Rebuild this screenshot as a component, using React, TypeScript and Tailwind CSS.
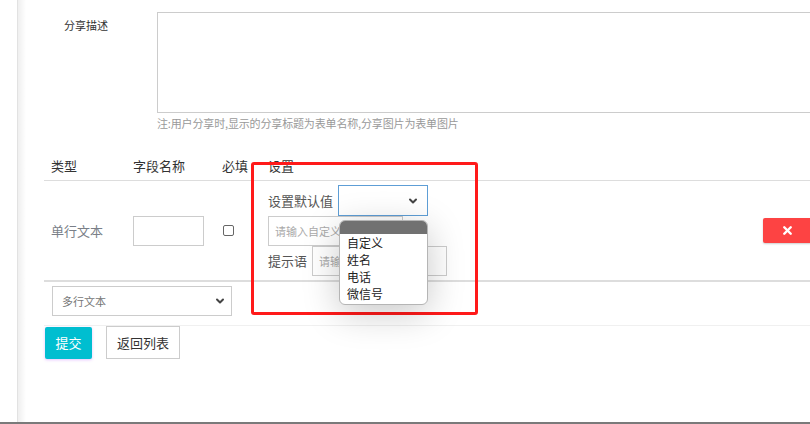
import { ChevronDown, X } from 'lucide-react';

const font = { fontFamily: '"Noto Sans CJK SC", "Noto Sans", sans-serif' };

const options = ['自定义', '姓名', '电话', '微信号'];

const App = () => {
	return (
		<div
			className="relative flex h-[424px] w-[810px] overflow-hidden border-b-2 border-[#7a7a7a] bg-white"
			style={font}
		>
			{/* left rail */}
			<div className="w-[17px] shrink-0 bg-white" />
			<div className="w-[9px] shrink-0 border-l border-[#e2e2e2] bg-gradient-to-r from-[#efefef] to-white" />

			<main className="flex min-w-0 flex-1 flex-col pl-[18px]">
				{/* share description */}
				<section className="mt-[12px] flex">
					<div className="w-[113px] shrink-0 pl-[20px] pt-[5px] text-[11px] leading-[16px] text-[#333]">
						分享描述
					</div>
					<div className="flex flex-col">
						<textarea
							readOnly
							className="h-[101px] w-[680px] shrink-0 resize-none border border-[#cccccc] outline-none"
						/>
						<p className="mt-[2px] text-[11px] leading-[16px] tracking-[-0.15px] text-[#999]">
							注:用户分享时,显示的分享标题为表单名称,分享图片为表单图片
						</p>
					</div>
				</section>

				{/* field table */}
				<section className="mt-[19px] w-[780px]">
					<div className="flex h-[31px] items-center border-b border-[#dddddd] pt-[2px] text-[13px] text-[#333]">
						<div className="w-[89px] pl-[7px]">类型</div>
						<div className="w-[89px]">字段名称</div>
						<div className="w-[46px]">必填</div>
						<div>设置</div>
					</div>

					<div className="flex h-[101px] items-start border-b-2 border-[#dddddd] text-[13px]">
						<div className="flex h-full w-[89px] items-center pl-[7px] text-[#7a7f88]">
							单行文本
						</div>
						<div className="flex h-full w-[89px] items-center">
							<input className="h-[30px] w-[71px] border border-[#cccccc] outline-none" />
						</div>
						<div className="flex h-full w-[46px] items-center pl-[1px]">
							<span className="h-[11px] w-[11px] rounded-[2px] border border-[#666]" />
						</div>
						<div className="flex w-[495px] flex-col pt-[4px] text-[#555]">
							<div className="flex h-[31px] items-center gap-[5px]">
								<span>设置默认值</span>
								<div className="relative">
									<div className="flex h-[31px] w-[90px] items-center justify-end border border-[#5e9ed6] pr-[8px]">
										<ChevronDown size={12} strokeWidth={4} className="text-[#444]" />
									</div>
									{/* open dropdown */}
									<ul className="absolute left-[1px] top-[35px] z-10 w-[89px] overflow-hidden rounded-[6px] border border-[#b5b5b5] bg-white pb-[2px] text-[12px] leading-[17px] text-[#222] shadow-[0_8px_36px_rgba(0,0,0,0.22)]">
										<li className="h-[13px] bg-[#717171]" />
										{options.map((o) => (
											<li key={o} className="pl-[7px]">
												{o}
											</li>
										))}
									</ul>
								</div>
							</div>
							<input
								placeholder="请输入自定义值"
								className="h-[30px] w-[135px] border border-[#cccccc] px-[6px] text-[11px] outline-none placeholder:text-[#aaa]"
							/>
							<div className="flex h-[30px] items-center gap-[5px]">
								<span>提示语</span>
								<input
									placeholder="请输入提示语"
									className="h-[30px] w-[135px] border border-[#cccccc] px-[6px] text-[11px] outline-none placeholder:text-[#aaa]"
								/>
							</div>
						</div>
						<div className="flex h-full items-center">
							<button className="flex h-[25px] w-[49px] items-center justify-center rounded-[2px] bg-[#fd4343] text-white shadow-[0_1px_2px_rgba(0,0,0,0.2)]">
								<X size={13} strokeWidth={4.5} />
							</button>
						</div>
					</div>

					<div className="border-b border-[#f0f0f0] pb-[9px] pl-[8px] pt-[4px]">
						<div className="flex h-[30px] w-[180px] items-center justify-between border border-[#cccccc] pl-[9px] pr-[5px] text-[11px] text-[#777]">
							<span>多行文本</span>
							<ChevronDown size={12} strokeWidth={4} className="text-[#444]" />
						</div>
					</div>
				</section>

				{/* actions */}
				<div className="flex items-center gap-[14px] pl-[1px]">
					<button className="h-[32px] w-[47px] rounded-[2px] bg-[#00bed0] text-[13px] text-white shadow-[0_1px_3px_rgba(200,120,255,0.45)]">
						提交
					</button>
					<button className="h-[33px] w-[74px] border border-[#cccccc] bg-white text-[13px] text-[#333]">
						返回列表
					</button>
				</div>
			</main>

			{/* highlight annotation */}
			<div className="pointer-events-none absolute left-[251px] top-[162px] h-[153px] w-[227px] rounded-[3px] border-[3px] border-[#ff1a1a]" />
		</div>
	);
};

export default App;
